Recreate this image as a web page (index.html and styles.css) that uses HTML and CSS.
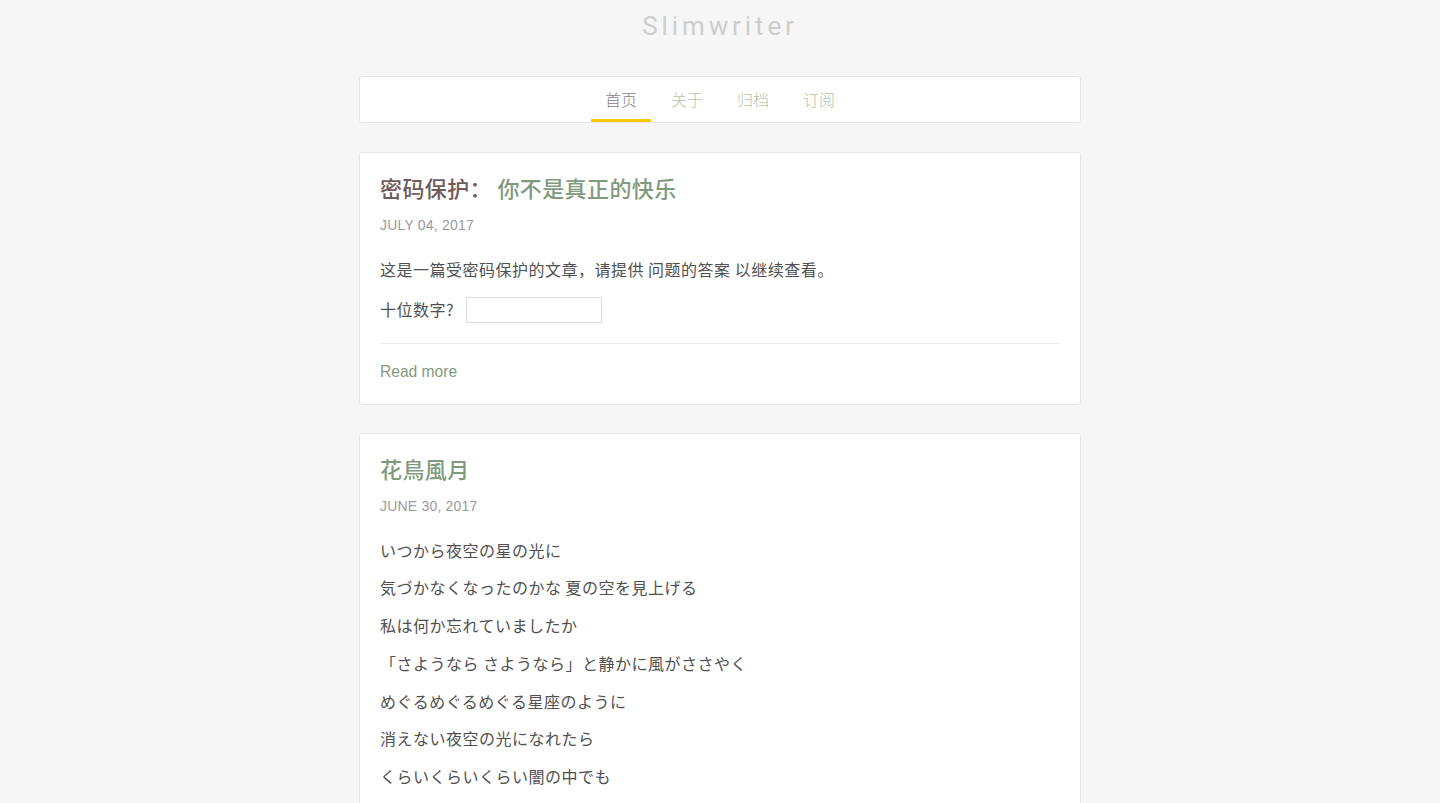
FILE: index.html
```html
<!DOCTYPE html>
<html lang="zh">
<head>
<meta charset="utf-8">
<title>Slimwriter</title>
<link rel="stylesheet" href="styles.css">
</head>
<body>
<header class="site-header">
  <h1 class="site-title">Slimwriter</h1>
</header>
<main class="wrap">
  <nav class="card nav">
    <ul class="nav-list">
      <li class="nav-item active">首页</li>
      <li class="nav-item">关于</li>
      <li class="nav-item">归档</li>
      <li class="nav-item">订阅</li>
    </ul>
  </nav>

  <article class="card post">
    <h2 class="post-title"><span class="protected">密码保护：</span> <span class="title-link">你不是真正的快乐</span></h2>
    <div class="post-date">July 04, 2017</div>
    <div class="post-body">
      <p>这是一篇受密码保护的文章，请提供 问题的答案 以继续查看。</p>
      <div class="pw-row"><label class="pw-label">十位数字?</label><span class="pw-input"></span></div>
    </div>
    <div class="post-foot"><span class="read-more">Read more</span></div>
  </article>

  <article class="card post">
    <h2 class="post-title"><span class="title-link">花鳥風月</span></h2>
    <div class="post-date">June 30, 2017</div>
    <div class="post-body">
      <p>いつから夜空の星の光に</p>
      <p>気づかなくなったのかな 夏の空を見上げる</p>
      <p>私は何か忘れていましたか</p>
      <p>「さようなら さようなら」と静かに風がささやく</p>
      <p>めぐるめぐるめぐる星座のように</p>
      <p>消えない夜空の光になれたら</p>
      <p>くらいくらいくらい闇の中でも</p>
      <p>いつも君を照らしてあげたい</p>
    </div>
  </article>
</main>
</body>
</html>
```

FILE: styles.css
```css
html, body {
  margin: 0;
  padding: 0;
}
body {
  background: #f6f6f6;
  font-family: "Liberation Sans", "Noto Sans CJK SC", sans-serif;
  color: #444;
}
.site-header {
  height: 76px;
  display: flex;
  justify-content: center;
}
.site-title {
  margin: 10px 0 0;
  font-family: Roboto, "Liberation Sans", sans-serif;
  font-weight: 400;
  font-size: 26px;
  line-height: 32px;
  letter-spacing: 3.9px;
  color: #cdcdcd;
}
.wrap {
  width: 722px;
  margin: 0 auto;
  display: flex;
  flex-direction: column;
  gap: 28px;
}
.card {
  background: #fff;
  border: 1px solid #e6e6e6;
  border-radius: 3px;
  box-sizing: border-box;
}
.nav {
  height: 47px;
  margin-bottom: 1px;
}
.nav-list {
  list-style: none;
  margin: 0;
  padding: 0;
  display: flex;
  justify-content: center;
  gap: 6px;
  height: 45px;
}
.nav-item {
  width: 60px;
  box-sizing: border-box;
  text-align: center;
  font-size: 16px;
  line-height: 44px;
  color: #b7c3b0;
  font-family: "Noto Sans CJK SC", sans-serif;
  font-weight: 300;
  border-bottom: 3px solid transparent;
  height: 45px;
}
.nav-item.active {
  color: #8d8282;
  border-bottom-color: #f6c900;
}
.post {
  padding: 20px 20px 20px;
}
.post-title {
  margin: 0;
  font-size: 22px;
  line-height: 28px;
  letter-spacing: 0.4px;
  font-weight: 500;
  font-family: "Noto Sans CJK SC", sans-serif;
}
.protected {
  color: #6e5b5a;
}
.title-link {
  color: #809a7c;
}
.post-date {
  margin-top: 14px;
  font-size: 14px;
  line-height: 20px;
  letter-spacing: 0.2px;
  color: #9a9a9a;
  text-transform: uppercase;
}
.post-body {
  margin-top: 22px;
  font-family: "Noto Sans CJK SC", sans-serif;
  font-size: 16px;
  letter-spacing: 0.5px;
  color: #505050;
  font-weight: 400;
}
.post-body p {
  margin: 0 0 12px;
  line-height: 25.7px;
}
.pw-row {
  display: flex;
  align-items: center;
  height: 30px;
  gap: 12px;
}
.pw-label {
  line-height: 25px;
}
.pw-input {
  display: block;
  width: 136px;
  height: 26px;
  box-sizing: border-box;
  border: 1px solid #dcdcdc;
  background: #fff;
}
.post-foot {
  margin-top: 18px;
  border-top: 1px solid #ebebeb;
  padding-top: 16px;
}
.read-more {
  display: block;
  font-size: 15.6px;
  line-height: 24px;
  color: #83997f;
}
```
